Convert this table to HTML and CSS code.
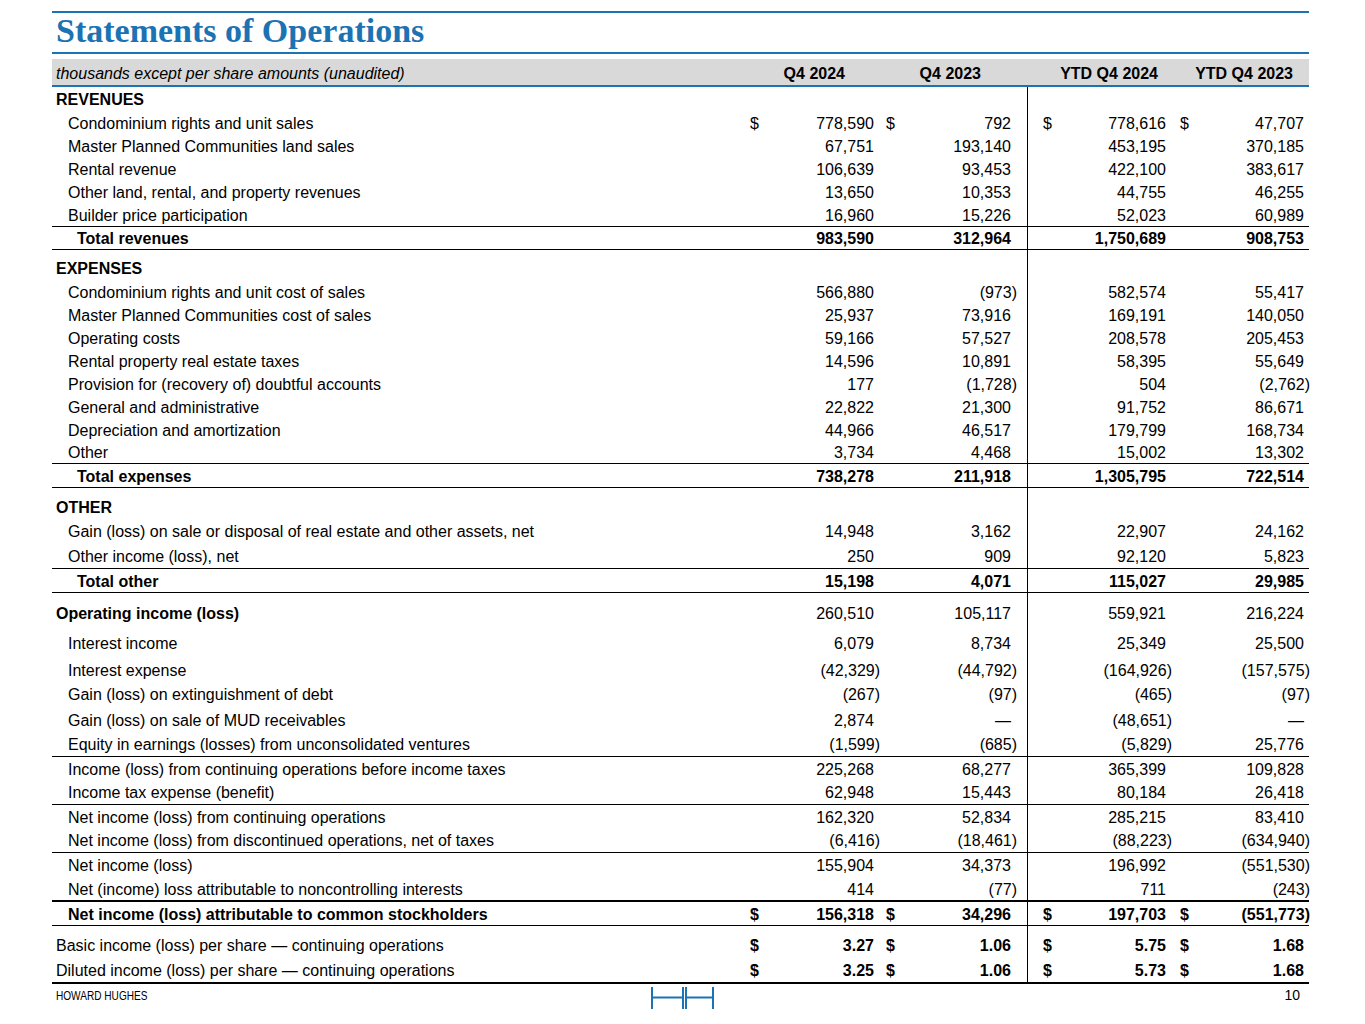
FILE: index.html
```html
<!DOCTYPE html>
<html>
<head>
<meta charset="utf-8">
<title>Statements of Operations</title>
<link rel="stylesheet" href="styles.css">
</head>
<body>
<div class="page">
  <div class="rule-blue"></div>
  <h1 class="title">Statements of Operations</h1>
  <div class="rule-blue"></div>
  <div class="head">
    <div class="lab">thousands except per share amounts (unaudited)</div>
    <div class="hc ha">Q4 2024</div>
    <div class="hc hb">Q4 2023</div>
    <div class="hc hcc">YTD Q4 2024</div>
    <div class="hc hd">YTD Q4 2023</div>
  </div>

  <div class="body">
    <div class="row h24 sect"><div class="lab">REVENUES</div><div class="v a"></div><div class="v b"></div><div class="v c"></div><div class="v d"></div></div>
    <div class="row h23"><div class="lab in">Condominium rights and unit sales</div><div class="v a"><span>$</span><span>778,590</span></div><div class="v b"><span>$</span><span>792</span></div><div class="v c"><span>$</span><span>778,616</span></div><div class="v d"><span>$</span><span>47,707</span></div></div>
    <div class="row h23"><div class="lab in">Master Planned Communities land sales</div><div class="v a"><span></span><span>67,751</span></div><div class="v b"><span></span><span>193,140</span></div><div class="v c"><span></span><span>453,195</span></div><div class="v d"><span></span><span>370,185</span></div></div>
    <div class="row h23"><div class="lab in">Rental revenue</div><div class="v a"><span></span><span>106,639</span></div><div class="v b"><span></span><span>93,453</span></div><div class="v c"><span></span><span>422,100</span></div><div class="v d"><span></span><span>383,617</span></div></div>
    <div class="row h23"><div class="lab in">Other land, rental, and property revenues</div><div class="v a"><span></span><span>13,650</span></div><div class="v b"><span></span><span>10,353</span></div><div class="v c"><span></span><span>44,755</span></div><div class="v d"><span></span><span>46,255</span></div></div>
    <div class="row h23"><div class="lab in">Builder price participation</div><div class="v a"><span></span><span>16,960</span></div><div class="v b"><span></span><span>15,226</span></div><div class="v c"><span></span><span>52,023</span></div><div class="v d"><span></span><span>60,989</span></div></div>
    <div class="row h23 bt bold"><div class="lab tot">Total revenues</div><div class="v a"><span></span><span>983,590</span></div><div class="v b"><span></span><span>312,964</span></div><div class="v c"><span></span><span>1,750,689</span></div><div class="v d"><span></span><span>908,753</span></div></div>

    <div class="row h31 bt p6 sect"><div class="lab">EXPENSES</div><div class="v a"></div><div class="v b"></div><div class="v c"></div><div class="v d"></div></div>
    <div class="row h23"><div class="lab in">Condominium rights and unit cost of sales</div><div class="v a"><span></span><span>566,880</span></div><div class="v b neg"><span></span><span>(973)</span></div><div class="v c"><span></span><span>582,574</span></div><div class="v d"><span></span><span>55,417</span></div></div>
    <div class="row h23"><div class="lab in">Master Planned Communities cost of sales</div><div class="v a"><span></span><span>25,937</span></div><div class="v b"><span></span><span>73,916</span></div><div class="v c"><span></span><span>169,191</span></div><div class="v d"><span></span><span>140,050</span></div></div>
    <div class="row h23"><div class="lab in">Operating costs</div><div class="v a"><span></span><span>59,166</span></div><div class="v b"><span></span><span>57,527</span></div><div class="v c"><span></span><span>208,578</span></div><div class="v d"><span></span><span>205,453</span></div></div>
    <div class="row h23"><div class="lab in">Rental property real estate taxes</div><div class="v a"><span></span><span>14,596</span></div><div class="v b"><span></span><span>10,891</span></div><div class="v c"><span></span><span>58,395</span></div><div class="v d"><span></span><span>55,649</span></div></div>
    <div class="row h23"><div class="lab in">Provision for (recovery of) doubtful accounts</div><div class="v a"><span></span><span>177</span></div><div class="v b neg"><span></span><span>(1,728)</span></div><div class="v c"><span></span><span>504</span></div><div class="v d neg"><span></span><span>(2,762)</span></div></div>
    <div class="row h23"><div class="lab in">General and administrative</div><div class="v a"><span></span><span>22,822</span></div><div class="v b"><span></span><span>21,300</span></div><div class="v c"><span></span><span>91,752</span></div><div class="v d"><span></span><span>86,671</span></div></div>
    <div class="row h23"><div class="lab in">Depreciation and amortization</div><div class="v a"><span></span><span>44,966</span></div><div class="v b"><span></span><span>46,517</span></div><div class="v c"><span></span><span>179,799</span></div><div class="v d"><span></span><span>168,734</span></div></div>
    <div class="row h22"><div class="lab in">Other</div><div class="v a"><span></span><span>3,734</span></div><div class="v b"><span></span><span>4,468</span></div><div class="v c"><span></span><span>15,002</span></div><div class="v d"><span></span><span>13,302</span></div></div>
    <div class="row h24 bt bold"><div class="lab tot">Total expenses</div><div class="v a"><span></span><span>738,278</span></div><div class="v b"><span></span><span>211,918</span></div><div class="v c"><span></span><span>1,305,795</span></div><div class="v d"><span></span><span>722,514</span></div></div>

    <div class="row h32 bt p7 sect"><div class="lab">OTHER</div><div class="v a"></div><div class="v b"></div><div class="v c"></div><div class="v d"></div></div>
    <div class="row h24"><div class="lab in">Gain (loss) on sale or disposal of real estate and other assets, net</div><div class="v a"><span></span><span>14,948</span></div><div class="v b"><span></span><span>3,162</span></div><div class="v c"><span></span><span>22,907</span></div><div class="v d"><span></span><span>24,162</span></div></div>
    <div class="row h25"><div class="lab in">Other income (loss), net</div><div class="v a"><span></span><span>250</span></div><div class="v b"><span></span><span>909</span></div><div class="v c"><span></span><span>92,120</span></div><div class="v d"><span></span><span>5,823</span></div></div>
    <div class="row h24 bt bold"><div class="lab tot">Total other</div><div class="v a"><span></span><span>15,198</span></div><div class="v b"><span></span><span>4,071</span></div><div class="v c"><span></span><span>115,027</span></div><div class="v d"><span></span><span>29,985</span></div></div>

    <div class="row h35 bt p5"><div class="lab sect">Operating income (loss)</div><div class="v a"><span></span><span>260,510</span></div><div class="v b"><span></span><span>105,117</span></div><div class="v c"><span></span><span>559,921</span></div><div class="v d"><span></span><span>216,224</span></div></div>
    <div class="row h31"><div class="lab in">Interest income</div><div class="v a"><span></span><span>6,079</span></div><div class="v b"><span></span><span>8,734</span></div><div class="v c"><span></span><span>25,349</span></div><div class="v d"><span></span><span>25,500</span></div></div>
    <div class="row h23"><div class="lab in">Interest expense</div><div class="v a neg"><span></span><span>(42,329)</span></div><div class="v b neg"><span></span><span>(44,792)</span></div><div class="v c neg"><span></span><span>(164,926)</span></div><div class="v d neg"><span></span><span>(157,575)</span></div></div>
    <div class="row h26"><div class="lab in">Gain (loss) on extinguishment of debt</div><div class="v a neg"><span></span><span>(267)</span></div><div class="v b neg"><span></span><span>(97)</span></div><div class="v c neg"><span></span><span>(465)</span></div><div class="v d neg"><span></span><span>(97)</span></div></div>
    <div class="row h25"><div class="lab in">Gain (loss) on sale of MUD receivables</div><div class="v a"><span></span><span>2,874</span></div><div class="v b"><span></span><span>—</span></div><div class="v c neg"><span></span><span>(48,651)</span></div><div class="v d"><span></span><span>—</span></div></div>
    <div class="row h24"><div class="lab in">Equity in earnings (losses) from unconsolidated ventures</div><div class="v a neg"><span></span><span>(1,599)</span></div><div class="v b neg"><span></span><span>(685)</span></div><div class="v c neg"><span></span><span>(5,829)</span></div><div class="v d"><span></span><span>25,776</span></div></div>
    <div class="row h24 bt"><div class="lab in">Income (loss) from continuing operations before income taxes</div><div class="v a"><span></span><span>225,268</span></div><div class="v b"><span></span><span>68,277</span></div><div class="v c"><span></span><span>365,399</span></div><div class="v d"><span></span><span>109,828</span></div></div>
    <div class="row h24"><div class="lab in">Income tax expense (benefit)</div><div class="v a"><span></span><span>62,948</span></div><div class="v b"><span></span><span>15,443</span></div><div class="v c"><span></span><span>80,184</span></div><div class="v d"><span></span><span>26,418</span></div></div>
    <div class="row h24 bt"><div class="lab in">Net income (loss) from continuing operations</div><div class="v a"><span></span><span>162,320</span></div><div class="v b"><span></span><span>52,834</span></div><div class="v c"><span></span><span>285,215</span></div><div class="v d"><span></span><span>83,410</span></div></div>
    <div class="row h24"><div class="lab in">Net income (loss) from discontinued operations, net of taxes</div><div class="v a neg"><span></span><span>(6,416)</span></div><div class="v b neg"><span></span><span>(18,461)</span></div><div class="v c neg"><span></span><span>(88,223)</span></div><div class="v d neg"><span></span><span>(634,940)</span></div></div>
    <div class="row h25 bt"><div class="lab in">Net income (loss)</div><div class="v a"><span></span><span>155,904</span></div><div class="v b"><span></span><span>34,373</span></div><div class="v c"><span></span><span>196,992</span></div><div class="v d neg"><span></span><span>(551,530)</span></div></div>
    <div class="row h23"><div class="lab in">Net (income) loss attributable to noncontrolling interests</div><div class="v a"><span></span><span>414</span></div><div class="v b neg"><span></span><span>(77)</span></div><div class="v c"><span></span><span>711</span></div><div class="v d neg"><span></span><span>(243)</span></div></div>
    <div class="row h25 bt2 bold"><div class="lab in">Net income (loss) attributable to common stockholders</div><div class="v a"><span>$</span><span>156,318</span></div><div class="v b"><span>$</span><span>34,296</span></div><div class="v c"><span>$</span><span>197,703</span></div><div class="v d neg"><span>$</span><span>(551,773)</span></div></div>
    <div class="row h33 bt p6 vbold"><div class="lab">Basic income (loss) per share — continuing operations</div><div class="v a"><span>$</span><span>3.27</span></div><div class="v b"><span>$</span><span>1.06</span></div><div class="v c"><span>$</span><span>5.75</span></div><div class="v d"><span>$</span><span>1.68</span></div></div>
    <div class="row h24 bb2 vbold"><div class="lab">Diluted income (loss) per share — continuing operations</div><div class="v a"><span>$</span><span>3.25</span></div><div class="v b"><span>$</span><span>1.06</span></div><div class="v c"><span>$</span><span>5.73</span></div><div class="v d"><span>$</span><span>1.68</span></div></div>
  </div>

  <div class="foot">
    <div class="brand">HOWARD HUGHES</div>
    <svg class="logo" width="64" height="22" viewBox="0 0 64 22" aria-label="HH logo">
      <g stroke="#1b73b3" stroke-width="2" fill="none">
        <line x1="1" y1="0" x2="1" y2="22"/>
        <line x1="1" y1="10.5" x2="32" y2="10.5"/>
        <line x1="32" y1="0" x2="32" y2="22"/>
        <line x1="35" y1="0" x2="35" y2="22"/>
        <line x1="35" y1="10.5" x2="62" y2="10.5"/>
        <line x1="62" y1="0" x2="62" y2="22"/>
      </g>
    </svg>
    <div class="pno">10</div>
  </div>
</div>
</body>
</html>
```

FILE: styles.css
```css
* { box-sizing: border-box; }
html, body { margin: 0; padding: 0; background: #fff; }
body {
  font-family: "Liberation Sans", Arial, sans-serif;
  font-size: 16px;
  color: #000;
}
.page {
  width: 1257px;
  margin-left: 52px;
  padding-top: 11px;
}
.rule-blue {
  height: 2px;
  background: #1b73b3;
}
.title {
  margin: 0;
  height: 39px;
  padding-left: 4px;
  font-family: "Liberation Serif", "Times New Roman", serif;
  font-weight: bold;
  font-size: 34px;
  line-height: 36px;
  color: #1b73b3;
}
.head {
  margin-top: 5px;
  height: 28px;
  padding-top: 3px;
  background: #d9d9d9;
  border-bottom: 2px solid #1b73b3;
  display: grid;
  grid-template-columns: 688px 140px 147px 146px 136px;
  align-items: center;
}
.head .lab {
  font-style: italic;
  padding-left: 4px;
}
.hc { font-weight: bold; text-align: right; }
.ha { padding-right: 35px; }
.hb { padding-right: 46px; }
.hcc { padding-right: 15px; }
.hd { padding-right: 16px; }

.row {
  display: grid;
  grid-template-columns: 688px 140px 147px 146px 136px;
  --pt: 0px;
}
.row > div {
  display: flex;
  align-items: center;
  padding-top: calc(var(--pt) + 2px);
  white-space: nowrap;
}
.lab { padding-left: 4px; }
.lab.in { padding-left: 16px; }
.lab.tot { padding-left: 25px; }
.sect .lab, .lab.sect { font-weight: bold; }
.bold > div { font-weight: bold; }
.vbold > .v { font-weight: bold; }

.v { justify-content: space-between; }
.v.a { padding-left: 10px; padding-right: 6px; }
.v.b { padding-left: 6px; padding-right: 16px; }
.v.c { padding-left: 15px; padding-right: 7px; border-left: 1px solid #000; }
.v.d { padding-left: 7px; padding-right: 5px; }
.v.a.neg { padding-right: 0; }
.v.b.neg { padding-right: 10px; }
.v.c.neg { padding-right: 1px; }
.v.d.neg { padding-right: 0; margin-right: -1px; }

.h22 { height: 22px; }
.h23 { height: 23px; }
.h24 { height: 24px; }
.h25 { height: 25px; }
.h26 { height: 26px; }
.h31 { height: 31px; }
.h32 { height: 32px; }
.h33 { height: 33px; }
.h35 { height: 35px; }
.p5 { --pt: 5px; }
.p6 { --pt: 6px; }
.p7 { --pt: 7px; }
.bt { border-top: 1px solid #000; }
.bt2 { border-top: 2px solid #000; }
.bb2 { border-bottom: 2px solid #000; height: 26px; }

.foot {
  height: 40px;
  display: grid;
  grid-template-columns: 1fr auto 1fr;
  align-items: start;
}
.brand {
  padding-left: 4px;
  padding-top: 5px;
  font-size: 12px;
  white-space: nowrap;
  transform: scaleX(0.84);
  transform-origin: 4px 0;
}
.logo {
  display: block;
  margin-top: 3px;
  margin-left: 4px;
}
.pno {
  text-align: right;
  padding-right: 9px;
  padding-top: 3px;
  font-size: 14px;
}
```
